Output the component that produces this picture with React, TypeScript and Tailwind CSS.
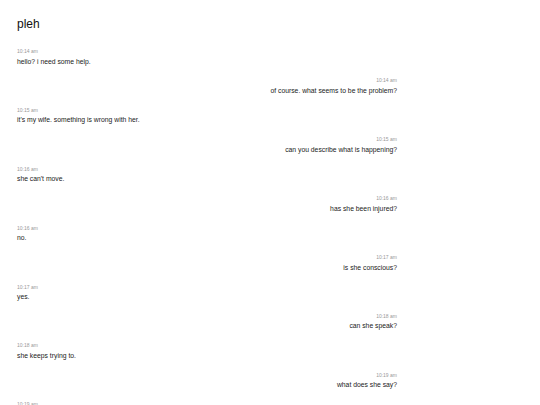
const messages: { time: string; text: string; mine: boolean }[] = [
  { time: "10:14 am", text: "hello? i need some help.", mine: false },
  { time: "10:14 am", text: "of course. what seems to be the problem?", mine: true },
  { time: "10:15 am", text: "it's my wife. something is wrong with her.", mine: false },
  { time: "10:15 am", text: "can you describe what is happening?", mine: true },
  { time: "10:16 am", text: "she can't move.", mine: false },
  { time: "10:16 am", text: "has she been injured?", mine: true },
  { time: "10:16 am", text: "no.", mine: false },
  { time: "10:17 am", text: "is she conscious?", mine: true },
  { time: "10:17 am", text: "yes.", mine: false },
  { time: "10:18 am", text: "can she speak?", mine: true },
  { time: "10:18 am", text: "she keeps trying to.", mine: false },
  { time: "10:19 am", text: "what does she say?", mine: true },
  { time: "10:19 am", text: "she says...", mine: false },
];

export default function App() {
  return (
    <div className="min-h-screen bg-white font-['Liberation_Sans',Arial,sans-serif] text-[#222]">
      <div className="w-[380px] ml-[17px] pt-[15px]">
        <h1 className="text-[12px] leading-[18px] font-normal text-[#111]">pleh</h1>
        <div className="mt-[15px] flex flex-col">
          {messages.map((m, i) => (
            <div
              key={i}
              className={`h-[29.44px] shrink-0 flex flex-col ${m.mine ? "items-end text-right" : "items-start"}`}
            >
              <span className="text-[5px] leading-[7px] text-[#999]">{m.time}</span>
              <p className="mt-[1.5px] text-[6.8px] leading-[10px]">{m.text}</p>
            </div>
          ))}
        </div>
      </div>
    </div>
  );
}
